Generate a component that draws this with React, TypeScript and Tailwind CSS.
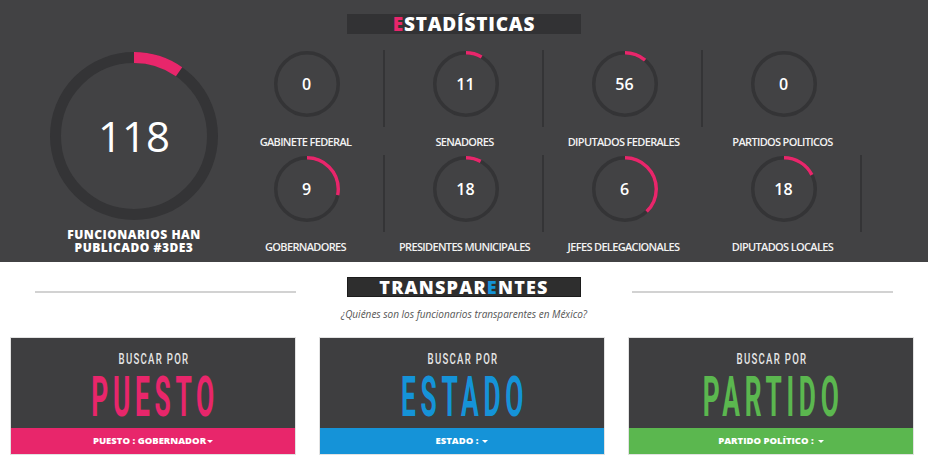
import React from 'react';

type Stat = { label: string; value: number; angle: number; divider: boolean };

const rowOne: Stat[] = [
  { label: 'GABINETE FEDERAL', value: 0, angle: 0, divider: true },
  { label: 'SENADORES', value: 11, angle: 30, divider: true },
  { label: 'DIPUTADOS FEDERALES', value: 56, angle: 40, divider: true },
  { label: 'PARTIDOS POLITICOS', value: 0, angle: 0, divider: false },
];

const rowTwo: Stat[] = [
  { label: 'GOBERNADORES', value: 9, angle: 101, divider: true },
  { label: 'PRESIDENTES MUNICIPALES', value: 18, angle: 28, divider: true },
  { label: 'JEFES DELEGACIONALES', value: 6, angle: 136, divider: false },
  { label: 'DIPUTADOS LOCALES', value: 18, angle: 63, divider: true },
];

function Ring({ size, stroke, angle }: { size: number; stroke: number; angle: number }) {
  const r = (size - stroke) / 2;
  const c = 2 * Math.PI * r;
  const mid = size / 2;
  return (
    <svg width={size} height={size} className="[grid-area:1/1]">
      <circle cx={mid} cy={mid} r={r} fill="none" stroke="#343436" strokeWidth={stroke} />
      {angle > 0 && (
        <circle
          cx={mid}
          cy={mid}
          r={r}
          fill="none"
          stroke="#e8266b"
          strokeWidth={stroke}
          strokeDasharray={`${(c * angle) / 360} ${c}`}
          transform={`rotate(-90 ${mid} ${mid})`}
        />
      )}
    </svg>
  );
}

function StatCell({ stat }: { stat: Stat }) {
  return (
    <div className="flex flex-col pb-[5px]">
      <div
        className={
          'h-[77px] flex justify-center pt-[1px] pl-[4px] ' +
          (stat.divider ? 'border-r-2 border-[#343436]' : 'border-r-2 border-transparent')
        }
      >
        <div className="grid place-items-center w-[66px] h-[66px]">
          <Ring size={66} stroke={3.5} angle={stat.angle} />
          <span className="[grid-area:1/1] text-white text-[16px] font-semibold leading-none">{stat.value}</span>
        </div>
      </div>
      <div className="mt-[7px] h-[16px] leading-[16px] text-center text-[11px] font-semibold tracking-[-0.06em] text-[#f2f2f2]">
        {stat.label}
      </div>
    </div>
  );
}

type Card = { word: string; color: string; text: string; bar: string; gap: boolean };

const cards: Card[] = [
  { word: 'PUESTO', color: 'text-[#e8266b]', text: 'PUESTO : GOBERNADOR', bar: 'bg-[#e8266b]', gap: false },
  { word: 'ESTADO', color: 'text-[#1593d8]', text: 'ESTADO :', bar: 'bg-[#1593d8]', gap: true },
  { word: 'PARTIDO', color: 'text-[#5bb74f]', text: 'PARTIDO POLÍTICO :', bar: 'bg-[#5bb74f]', gap: true },
];

function SearchCard({ card }: { card: Card }) {
  return (
    <div className="w-[286px] flex flex-col border border-[#e2e2e2]">
      <div className="h-[90px] bg-[#3e3e40] flex flex-col items-center pt-[14px] font-['Roboto',sans-serif]">
        <span className="inline-block leading-[15px] text-[15px] font-medium tracking-[2px] pl-[2px] text-[#e6e6e6] scale-x-[0.64]">
          BUSCAR POR
        </span>
        <span className={'inline-block mt-[2px] leading-[56px] text-[56px] font-bold tracking-[10px] pl-[10px] scale-x-[0.47] ' + card.color}>
          {card.word}
        </span>
      </div>
      <div className={'h-[26px] flex items-center justify-center ' + card.bar}>
        <span className="text-white text-[9.5px] font-extrabold">{card.text}</span>
        <span
          className={
            'inline-block border-x-[3px] border-x-transparent border-t-[3px] border-t-white ' + (card.gap ? 'ml-[4px]' : 'ml-[1px]')
          }
        ></span>
      </div>
    </div>
  );
}

export default function App() {
  return (
    <div className="w-[928px] h-[460px] overflow-hidden bg-white font-['Open_Sans',sans-serif]">
      {/* Estadisticas */}
      <div className="h-[262px] bg-[#424244] pt-[14px]">
        <div className="flex justify-center">
          <div className="w-[234px] h-[20px] bg-[#323234] flex items-center justify-center">
            <span className="text-[19px] font-extrabold text-white leading-none tracking-[0.8px]">
              <span className="text-[#e8266b]">E</span>STADÍSTICAS
            </span>
          </div>
        </div>

        <div className="flex mt-[16px]">
          <div className="w-[226px] pl-[42px] flex flex-col items-center">
            <div className="grid place-items-center w-[168px] h-[168px] mt-[2px]">
              <Ring size={168} stroke={11} angle={35} />
              <span className="[grid-area:1/1] text-white text-[42px] font-normal leading-none">118</span>
            </div>
            <div className="mt-[8px] text-center text-white text-[12px] font-extrabold leading-[13px] tracking-[0.5px]">
              FUNCIONARIOS HAN
              <br />
              PUBLICADO #3DE3
            </div>
          </div>

          <div className="grid grid-cols-[repeat(4,159px)]">
            {rowOne.map((s) => (
              <StatCell key={s.label} stat={s} />
            ))}
            {rowTwo.map((s) => (
              <StatCell key={s.label} stat={s} />
            ))}
          </div>
        </div>
      </div>

      {/* Transparentes */}
      <div className="pt-[15px]">
        <div className="flex items-start px-[35px]">
          <div className="flex-1 h-[2px] mt-[14px] bg-[#d2d2d2]"></div>
          <div className="mx-[51px] w-[234px] h-[20px] bg-[#2e2e2e] border border-[#1c1c1c] flex items-center justify-center">
            <span className="text-[18px] font-extrabold text-white leading-none tracking-[1.2px]">
              TRANSPAR<span className="text-[#1593d8]">E</span>NTES
            </span>
          </div>
          <div className="flex-1 h-[2px] mt-[14px] bg-[#d2d2d2]"></div>
        </div>

        <p className="mt-[10px] text-center text-[10px] leading-[14px] italic text-[#555555]">
          ¿Quiénes son los funcionarios transparentes en México?
        </p>

        <div className="mt-[16px] flex gap-[23px] pl-[10px]">
          {cards.map((c) => (
            <SearchCard key={c.word} card={c} />
          ))}
        </div>
      </div>
    </div>
  );
}
